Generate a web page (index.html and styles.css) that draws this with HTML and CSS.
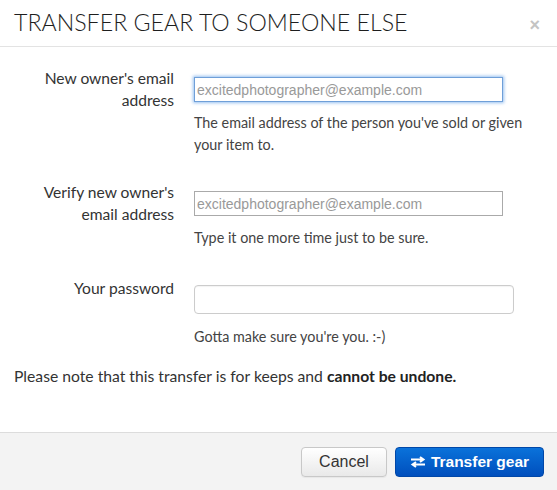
FILE: index.html
```html
<!DOCTYPE html>
<html>
<head>
<meta charset="utf-8">
<link rel="stylesheet" href="styles.css">
</head>
<body>
<div class="modal">
  <div class="modal-header">
    <h3 class="title">TRANSFER GEAR TO SOMEONE ELSE</h3>
    <span class="close">×</span>
  </div>
  <div class="modal-body">
    <div class="group g1">
      <label class="label">New owner's email address</label>
      <div class="controls">
        <input class="field native focused" type="text" placeholder="excitedphotographer@example.com">
        <p class="help">The email address of the person you've sold or given your item to.</p>
      </div>
    </div>
    <div class="group g2">
      <label class="label">Verify new owner's email address</label>
      <div class="controls">
        <input class="field native" type="text" placeholder="excitedphotographer@example.com">
        <p class="help h2">Type it one more time just to be sure.</p>
      </div>
    </div>
    <div class="group g3">
      <label class="label">Your password</label>
      <div class="controls">
        <input class="field pw" type="password">
        <p class="help h3">Gotta make sure you're you. :-)</p>
      </div>
    </div>
    <p class="note">Please note that this transfer is for keeps and <strong>cannot be undone.</strong></p>
  </div>
  <div class="modal-footer">
    <button class="btn btn-cancel">Cancel</button>
    <button class="btn btn-primary"><svg class="icon" width="16" height="12" viewBox="0 0 16 12"><path d="M1 3.5H13M10 1L13.5 3.5L10 6" fill="none" stroke="#fff" stroke-width="2"/><path d="M15 8.5H3M6 6L2.5 8.5L6 11" fill="none" stroke="#fff" stroke-width="2"/></svg>Transfer gear</button>
  </div>
</div>
</body>
</html>
```

FILE: styles.css
```css
* { box-sizing: border-box; }
html, body { margin: 0; padding: 0; background: #fff; }
body { font-family: Lato, "Open Sans", sans-serif; color: #333; width: 557px; height: 490px; overflow: hidden; }
.modal { display: flex; flex-direction: column; height: 490px; }
.modal-header { display: flex; align-items: flex-start; justify-content: space-between; padding: 7px 17px 0 14px; height: 47px; border-bottom: 1px solid #e3e3e3; }
.title { margin: 0; font-family: Lato, sans-serif; font-weight: 300; font-size: 23.2px; line-height: 30px; color: #1e1e1e; }
.close { font-family: "Liberation Sans", Arial, sans-serif; font-weight: bold; font-size: 18px; line-height: 20px; color: #c4c4c4; margin-top: 8px; }
.modal-body { flex: 1; padding: 20px 14px 0 14px; }
.group { display: grid; grid-template-columns: 160px 1fr; column-gap: 20px; }
.g2 { margin-top: 25px; }
.g3 { margin-top: 27px; }
.label { text-align: right; font-size: 15.6px; line-height: 22px; color: #333; }
.g3 .label { padding-top: 1px; }
.controls { display: flex; flex-direction: column; align-items: flex-start; }
.field { font-family: "Liberation Sans", Arial, sans-serif; font-size: 14px; padding: 0 2px; outline: none; }
.field::placeholder { color: #999; }
.native { width: 309px; height: 25px; border: 1px solid #aaa; border-radius: 0; margin-top: 10px; background: #fff; }
.focused { border: 1px solid #6f9fd8; box-shadow: 0 0 3px 1px rgba(82,150,230,0.6); }
.pw { width: 320px; height: 29px; border: 1px solid #ccc; border-radius: 4px; margin-top: 9px; box-shadow: inset 0 1px 1px rgba(0,0,0,0.05); }
.help { margin: 10px 0 0 0; font-size: 14.35px; line-height: 22px; color: #444; }
.help.h2 { margin-top: 11px; }
.help.h3 { margin-top: 12px; }
.note { margin: 17px 0 0 0; font-size: 15.7px; line-height: 22px; color: #333; }
.note strong { font-weight: bold; color: #222; }
.modal-footer { height: 58px; flex: none; background: #f3f3f3; border-top: 1px solid #dcdcdc; display: flex; justify-content: flex-end; align-items: flex-start; gap: 8px; padding: 14px 13px 0 0; }
.btn { font-family: "Liberation Sans", Arial, sans-serif; font-size: 16px; height: 30px; border-radius: 4px; padding: 0; display: flex; align-items: center; justify-content: center; }
.btn-cancel { width: 86px; color: #333; background: linear-gradient(#fff, #e9e9e9); border: 1px solid #c8c8c8; box-shadow: 0 1px 1px rgba(0,0,0,0.05); }
.btn-primary { width: 149px; color: #fff; font-weight: bold; font-size: 15.5px; background: linear-gradient(#0a72da, #004fbd); border: 1px solid #0047a8; gap: 5px; }
.icon { display: block; }
```
